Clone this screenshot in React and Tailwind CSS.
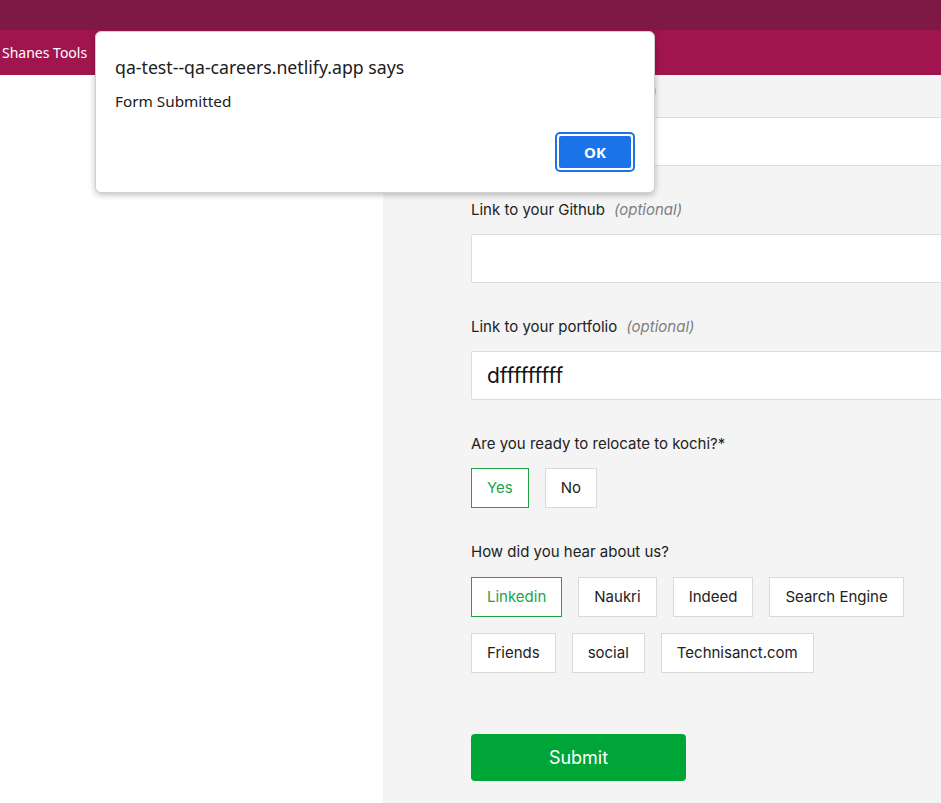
import React from "react";

function Chip({ label, active }) {
  return (
    <div
      className={
        "h-[40px] px-[15px] flex items-center bg-white border text-[15px] " +
        (active ? "border-[#1ea446] text-[#1ea446]" : "border-[#d9d9d9] text-[#222]")
      }
    >
      {label}
    </div>
  );
}

function Field({ label, value }) {
  return (
    <div className="flex flex-col">
      <div className="h-[20px] flex items-center text-[15px] text-[#222] mb-[14px]">
        {label}
        <span className="ml-[9px] italic text-[#808080]">(optional)</span>
      </div>
      <div className="h-[49px] w-[600px] bg-white border border-[#dcdcdc] rounded-[2px] flex items-center pl-[15px] text-[21px] text-[#111]">
        {value}
      </div>
    </div>
  );
}

export default function App() {
  return (
    <div className="relative w-[941px] h-[803px] overflow-hidden bg-white" style={{ fontFamily: "Inter, 'Noto Sans', sans-serif" }}>
      <div className="h-[30px] bg-[#7e1945]" />
      <div className="h-[45px] bg-[#a1154f] flex items-center pl-[2px]">
        <span className="text-white text-[14px]" style={{ fontFamily: "'Noto Sans', sans-serif" }}>Shanes Tools</span>
      </div>
      <div className="flex h-[728px]">
        <div className="w-[383px] shrink-0 bg-white" />
        <div className="flex-1 min-w-0 bg-[#f4f4f4] pl-[88px] pt-[8px]">
          <div className="flex flex-col gap-[34px]">
            <Field label="Link to your CV" value="" />
            <Field label="Link to your Github" value="" />
            <Field label="Link to your portfolio" value="dfffffffff" />
            <div className="flex flex-col">
              <div className="h-[20px] flex items-center text-[15px] text-[#222] mb-[14px]">Are you ready to relocate to kochi?*</div>
              <div className="flex gap-[16px]">
                <Chip label="Yes" active />
                <Chip label="No" />
              </div>
            </div>
            <div className="flex flex-col">
              <div className="h-[20px] flex items-center text-[15px] text-[#222] mb-[15px]">How did you hear about us?</div>
              <div className="flex flex-col gap-[16px]">
                <div className="flex gap-[16px]">
                  <Chip label="Linkedin" active />
                  <Chip label="Naukri" />
                  <Chip label="Indeed" />
                  <Chip label="Search Engine" />
                </div>
                <div className="flex gap-[16px]">
                  <Chip label="Friends" />
                  <Chip label="social" />
                  <Chip label="Technisanct.com" />
                </div>
              </div>
            </div>
          </div>
          <div className="mt-[61px] w-[215px] h-[47px] bg-[#00a537] rounded-[4px] flex items-center justify-center text-white text-[18px]">
            Submit
          </div>
        </div>
      </div>

      <div
        className="absolute left-[95px] top-[31px] w-[560px] h-[162px] bg-white rounded-[6px] border border-[#d0d0d0] shadow-[0_2px_6px_rgba(0,0,0,0.25)] flex flex-col px-[19px]"
        style={{ fontFamily: "'Noto Sans', sans-serif" }}
      >
        <div className="mt-[23px] text-[17.7px] text-[#202020] leading-[24px]">qa-test--qa-careers.netlify.app says</div>
        <div className="mt-[12px] text-[15.3px] text-[#202020] leading-[20px]">Form Submitted</div>
        <div className="flex-1" />
        <div className="flex justify-end mb-[20px]">
          <div className="w-[80px] h-[40px] rounded-[5px] border-2 border-[#1a73e8] p-[1px]">
            <div className="w-full h-full rounded-[3px] border border-white bg-[#1a73e8] flex items-center justify-center text-white text-[15px] font-bold">
              OK
            </div>
          </div>
        </div>
      </div>
    </div>
  );
}
